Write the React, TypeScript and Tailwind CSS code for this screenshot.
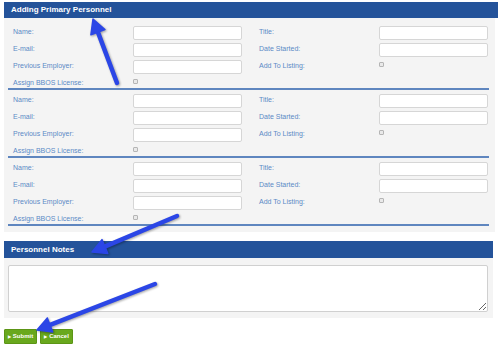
import React from 'react';

function Field({ label }: { label: string }) {
  return (
    <div className="flex h-[14px] items-start">
      <span className="w-[120px] pt-[1px] text-[7px] leading-[9px] text-[#5b8ac6]">{label}</span>
      <div className="h-[14px] w-[109px] rounded-[2px] border border-[#d6d6d6] bg-white" />
    </div>
  );
}

function CheckField({ label, h }: { label: string; h: string }) {
  return (
    <div className={`flex items-start ${h}`}>
      <span className="w-[120px] pt-[1px] text-[7px] leading-[9px] text-[#5b8ac6]">{label}</span>
      <div className="mt-[2px] h-[5px] w-[5px] rounded-[1px] border border-[#b5b5b5] bg-[#e9e9e9]" />
    </div>
  );
}

function Group({ first }: { first?: boolean }) {
  return (
    <div
      className={`ml-[4px] w-[481px] border-b-2 border-[#5f86bf] px-[5px] pb-[1px] ${first ? 'pt-[8px]' : 'pt-[4px]'}`}
    >
      <div className="flex gap-[16px]">
        <div className="flex w-[229px] flex-col gap-[3px]">
          <Field label="Name:" />
          <Field label="E-mail:" />
          <Field label="Previous Employer:" />
          <CheckField label="Assign BBOS License:" h="h-[10px]" />
        </div>
        <div className="flex w-[230px] flex-col gap-[3px] pl-[1px]">
          <Field label="Title:" />
          <Field label="Date Started:" />
          <CheckField label="Add To Listing:" h="h-[14px]" />
        </div>
      </div>
    </div>
  );
}

function Arrow({ tail, tip }: { tail: [number, number]; tip: [number, number] }) {
  const dx = tip[0] - tail[0];
  const dy = tip[1] - tail[1];
  const len = Math.hypot(dx, dy);
  const ux = dx / len;
  const uy = dy / len;
  const bx = tip[0] - ux * 14;
  const by = tip[1] - uy * 14;
  const px = -uy * 7.5;
  const py = ux * 7.5;
  const lx = tip[0] - ux * 10;
  const ly = tip[1] - uy * 10;
  return (
    <g>
      <line x1={tail[0]} y1={tail[1]} x2={lx} y2={ly} stroke="#2b46e6" strokeWidth={4.5} strokeLinecap="round" />
      <polygon
        points={`${tip[0]},${tip[1]} ${bx + px},${by + py} ${bx - px},${by - py}`}
        fill="#2b46e6"
        stroke="#2b46e6"
        strokeWidth={1.5}
        strokeLinejoin="round"
      />
    </g>
  );
}

export default function App() {
  return (
    <div className="relative h-[346px] w-[500px] overflow-hidden bg-white font-['Liberation_Sans',Arial,sans-serif]">
      <div className="px-[4px] pt-[2px]">
        {/* Primary personnel */}
        <div className="flex h-[16px] w-[494px] items-center bg-[#24539a] pl-[7px] text-[8px] font-bold text-white">
          Adding Primary Personnel
        </div>
        <div className="w-[491px] bg-[#f4f4f4] pb-[6px]">
          <Group first />
          <Group />
          <Group />
        </div>

        {/* Notes */}
        <div className="mt-[9px] flex h-[17px] w-[489px] items-center bg-[#24539a] pl-[7px] text-[8px] font-bold text-white">
          Personnel Notes
        </div>
        <div className="w-[489px] bg-[#f4f4f4] pb-[6px] pl-[4px] pt-[7px]">
          <textarea className="block h-[47px] w-[480px] rounded-[2px] border border-[#d0d0d0] bg-white outline-none" />
        </div>

        {/* Buttons */}
        <div className="mt-[11px] flex gap-[3px]">
          <button className="flex h-[15px] w-[33px] items-center justify-center gap-[2px] rounded-[1px] border border-[#5c9516] bg-[#69a81d] text-[6px] font-bold text-white">
            <span className="text-[4px]">▶</span>Submit
          </button>
          <button className="flex h-[15px] w-[33px] items-center justify-center gap-[2px] rounded-[1px] border border-[#5c9516] bg-[#69a81d] text-[6px] font-bold text-white">
            <span className="text-[4px]">▶</span>Cancel
          </button>
        </div>
      </div>

      <svg
        className="pointer-events-none absolute left-0 top-0 drop-shadow-[1px_1px_1px_rgba(0,0,0,0.35)]"
        width={500}
        height={346}
        viewBox="0 0 500 346"
      >
        <Arrow tail={[117, 83]} tip={[93, 19]} />
        <Arrow tail={[177, 216]} tip={[92, 252]} />
        <Arrow tail={[155, 284]} tip={[37, 330]} />
      </svg>
    </div>
  );
}
